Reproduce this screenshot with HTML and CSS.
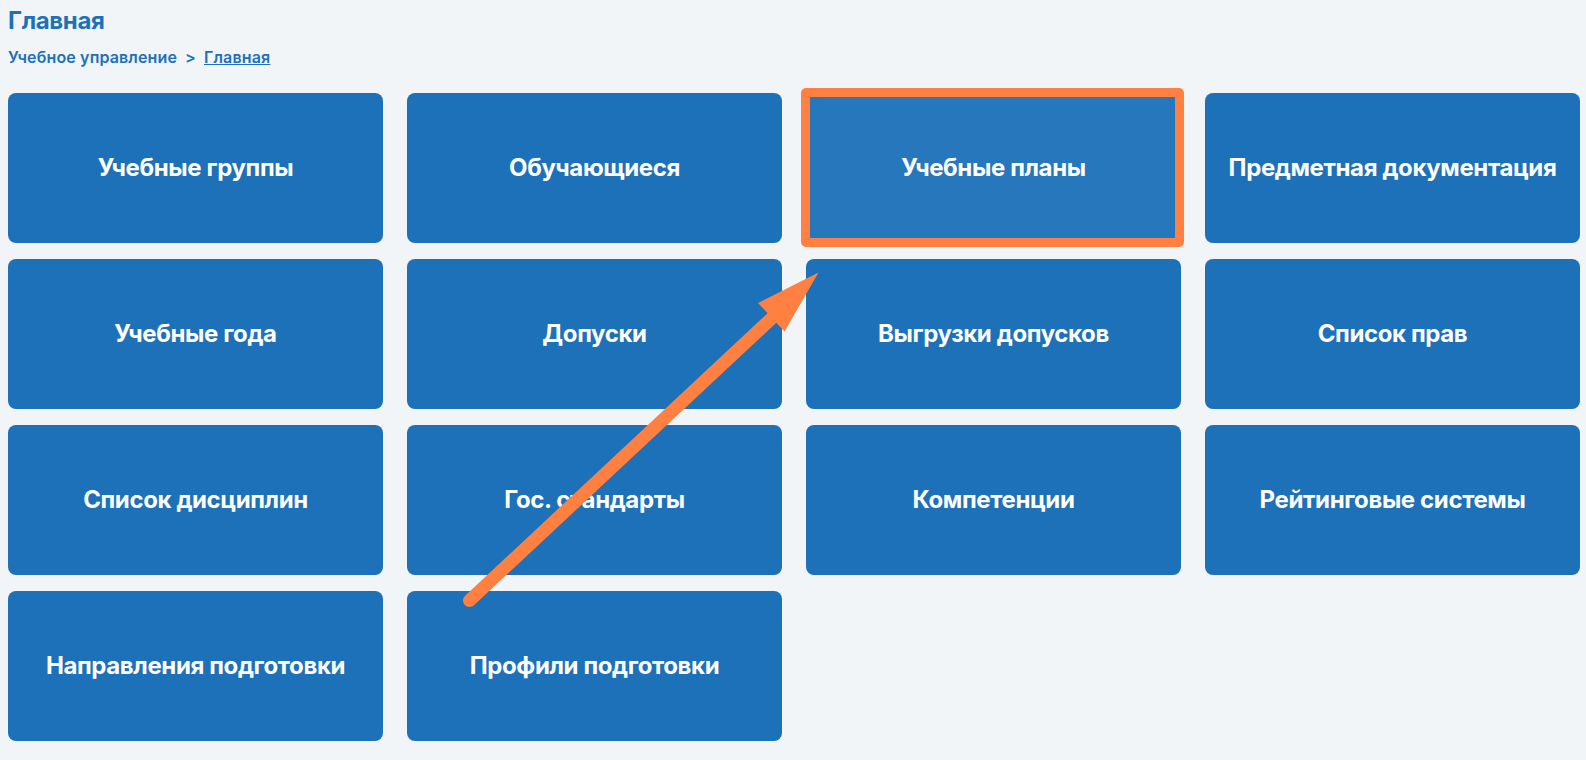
FILE: index.html
```html
<!DOCTYPE html>
<html lang="ru">
<head>
<meta charset="utf-8">
<title>Главная</title>
<link rel="stylesheet" href="styles.css">
</head>
<body>
<main class="page">
<h1 class="title">Главная</h1>
<nav class="crumbs"><span>Учебное управление</span><span class="sep">&gt;</span><a class="current">Главная</a></nav>
<div class="grid">
<a class="tile">Учебные группы</a>
<a class="tile">Обучающиеся</a>
<a class="tile tile-active">Учебные планы</a>
<a class="tile">Предметная документация</a>
<a class="tile">Учебные года</a>
<a class="tile">Допуски</a>
<a class="tile">Выгрузки допусков</a>
<a class="tile">Список прав</a>
<a class="tile">Список дисциплин</a>
<a class="tile">Гос. стандарты</a>
<a class="tile">Компетенции</a>
<a class="tile">Рейтинговые системы</a>
<a class="tile">Направления подготовки</a>
<a class="tile">Профили подготовки</a>
</div>
<svg class="arrow" width="1586" height="760" viewBox="0 0 1586 760">
<path d="M469.5 600.5L773 317" stroke="#ff8040" stroke-width="13" stroke-linecap="round"/>
<path d="M818.5 272.5L758 303L784.500 331.500Z" fill="#ff8040"/>
</svg>
</main>
</body>
</html>
```
FILE: styles.css
```css
* { box-sizing: border-box; }
body { margin: 0; background: #f1f5f8; color: #1d71b8; font-family: Inter, sans-serif; }
.page { position: relative; height: 760px; padding: 5px 6px 0 8px; overflow: hidden; }
.title { margin: 0; font-size: 24px; line-height: 32px; font-weight: 700; letter-spacing: -0.35px; }
.crumbs { display: flex; gap: 8px; margin-top: 8px; font-size: 16px; line-height: 24px; font-weight: 600; letter-spacing: 0.14px; }
.current { text-decoration: underline; }
.grid { display: grid; grid-template-columns: repeat(4, 375px); column-gap: 24px; row-gap: 16px; margin-top: 24px; }
.tile { display: flex; align-items: center; justify-content: center; height: 150px; border-radius: 8px; background: #1d71b8; color: #fff; font-size: 24px; line-height: 32px; font-weight: 700; letter-spacing: -0.38px; }
.tile-active { position: relative; background: #2777bc; }
.tile-active::after { content: ""; position: absolute; inset: -5px -3px -4px -5px; border: 9px solid #ff8040; border-radius: 5px; }
.arrow { position: absolute; left: 0; top: 0; pointer-events: none; }
```
